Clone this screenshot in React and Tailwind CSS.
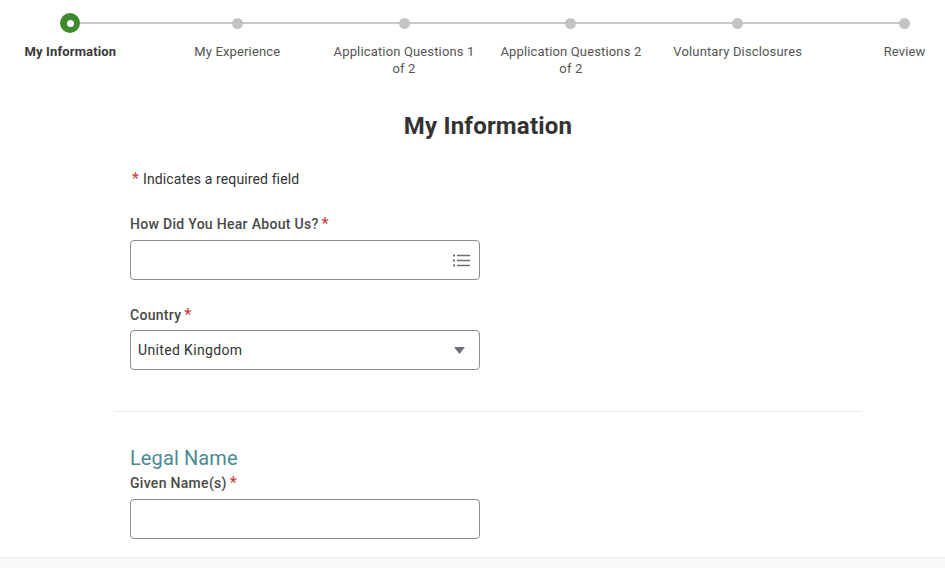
import React from "react";

const steps = [
  { label: "My Information", active: true },
  { label: "My Experience" },
  { label: "Application Questions 1 of 2" },
  { label: "Application Questions 2 of 2" },
  { label: "Voluntary Disclosures" },
  { label: "Review" },
];

function Star() {
  return <span className="text-[#c8423a] ml-[3px] text-[16px] leading-[16px]">*</span>;
}

function ListIcon() {
  return (
    <svg width="17" height="13" viewBox="0 0 17 13" fill="#6b6f74">
      <rect x="0" y="0.5" width="2" height="2" />
      <rect x="4" y="0.75" width="13" height="1.5" />
      <rect x="0" y="5.5" width="2" height="2" />
      <rect x="4" y="5.75" width="13" height="1.5" />
      <rect x="0" y="10.5" width="2" height="2" />
      <rect x="4" y="10.75" width="13" height="1.5" />
    </svg>
  );
}

function Caret() {
  return (
    <svg width="11" height="7" viewBox="0 0 11 7" fill="#6b6f74">
      <path d="M0 0 H11 L5.5 7 Z" />
    </svg>
  );
}

export default function App() {
  return (
    <div
      className="w-full h-[568px] overflow-hidden bg-white text-[#333]"
      style={{ fontFamily: "Roboto, 'Liberation Sans', sans-serif" }}
    >
      {/* Stepper */}
      <div className="h-[110px]">
        <div className="relative ml-[-13px] w-[1001px] flex pt-[13px]">
          <div className="absolute left-[83px] right-[83px] top-[22px] h-[2px] bg-[#c9c9c9]" />
          {steps.map((s, i) => (
            <div key={i} className="w-[166.83px] flex flex-col items-center">
              <div className="h-[20px] flex items-center justify-center relative">
                {s.active ? (
                  <div className="w-[20px] h-[20px] rounded-full bg-[#3f8a2c] flex items-center justify-center">
                    <div className="w-[7px] h-[7px] rounded-full bg-white" />
                  </div>
                ) : (
                  <div className="w-[11px] h-[11px] rounded-full bg-[#c4c4c4]" />
                )}
              </div>
              <div
                className={
                  "mt-[10px] max-w-[148px] text-center text-[13px] leading-[17px] tracking-[0.15px] " +
                  (s.active ? "font-bold text-[#3a3a3a]" : "text-[#555]")
                }
              >
                {s.label}
              </div>
            </div>
          ))}
        </div>
      </div>

      {/* Main */}
      <div className="ml-[114px] w-[748px]">
        <h1 className="text-center text-[24px] leading-[32px] font-bold tracking-[0.2px] text-[#333]">
          My Information
        </h1>

        <div className="pl-[16px]">
          <div className="mt-[27px] text-[14px] leading-[20px] tracking-[0.12px] text-[#333] flex items-center">
            <span className="text-[#c8423a] mr-[4px] ml-[2px] text-[16px] leading-[16px]">*</span>Indicates a required field
          </div>

          <div className="mt-[25px] text-[14px] leading-[20px] font-medium tracking-[0.3px] text-[#494949]">
            How Did You Hear About Us?<Star />
          </div>
          <div className="mt-[6px] w-[350px] h-[40px] rounded-[4px] border border-[#8c8c8c] bg-white flex items-center justify-end pr-[9px]">
            <ListIcon />
          </div>

          <div className="mt-[25px] text-[14px] leading-[20px] font-medium tracking-[0.3px] text-[#494949]">
            Country<Star />
          </div>
          <div className="mt-[5px] w-[350px] h-[40px] rounded-[4px] border border-[#8c8c8c] bg-white flex items-center justify-between pl-[7px] pr-[14px]">
            <span className="text-[14px] tracking-[0.35px] text-[#333]">United Kingdom</span>
            <Caret />
          </div>
        </div>

        <div className="mt-[41px] h-px bg-[#ebebeb]" />

        <div className="pl-[16px]">
          <div className="mt-[32px] text-[20px] leading-[28px] tracking-[0.1px] text-[#4b8a92]">Legal Name</div>
          <div className="mt-[1px] text-[14px] leading-[20px] font-medium tracking-[0.3px] text-[#494949]">
            Given Name(s)<Star />
          </div>
          <div className="mt-[6px] w-[350px] h-[40px] rounded-[4px] border border-[#8c8c8c] bg-white" />
        </div>
      </div>

      <div className="mt-[18px] h-px bg-[#ececec]" />
      <div className="h-[20px] bg-[#f8f8f8]" />
    </div>
  );
}
